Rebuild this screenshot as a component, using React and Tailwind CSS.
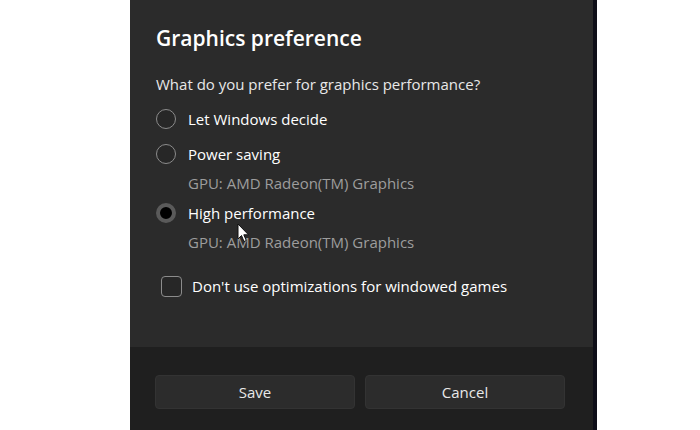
export default function App() {
  const font = { fontFamily: '"Open Sans", "Noto Sans", sans-serif' };
  return (
    <div className="w-[700px] h-[430px] flex bg-white overflow-hidden" style={font}>
      <div className="w-[130px] shrink-0 bg-white" />
      <div className="relative w-[463px] shrink-0 flex flex-col bg-[#2b2b2b]">
        <div className="flex-1 pl-[26px] pt-[24px]">
          <h1 className="text-[21px] leading-[28px] font-semibold text-white">Graphics preference</h1>
          <p className="mt-[22px] text-[15px] leading-[20px] text-[#e8e8e8]">
            What do you prefer for graphics performance?
          </p>

          <div className="mt-[15px] flex items-center gap-[12px] h-[20px]">
            <span className="w-[20px] h-[20px] rounded-full border-[1.5px] border-[#8c8c8c] bg-[#272727]" />
            <span className="text-[15px] text-white">Let Windows decide</span>
          </div>

          <div className="mt-[15px] flex items-center gap-[12px] h-[20px]">
            <span className="w-[20px] h-[20px] rounded-full border-[1.5px] border-[#8c8c8c] bg-[#272727]" />
            <span className="text-[15px] text-white">Power saving</span>
          </div>
          <p className="mt-[9px] pl-[32px] text-[15px] leading-[20px] text-[#9d9d9d]">GPU: AMD Radeon(TM) Graphics</p>

          <div className="mt-[10px] flex items-center gap-[12px] h-[20px]">
            <span className="w-[20px] h-[20px] rounded-full border-[4px] border-[#5a5a5a] bg-black" />
            <span className="text-[15px] text-white">High performance</span>
          </div>
          <p className="mt-[9px] pl-[32px] text-[15px] leading-[20px] text-[#9d9d9d]">GPU: AMD Radeon(TM) Graphics</p>

          <div className="mt-[23px] ml-[5px] flex items-center gap-[10px] h-[22px]">
            <span className="w-[21px] h-[21px] rounded-[4px] border-[1.5px] border-[#8c8c8c] bg-[#272727]" />
            <span className="text-[15px] text-white">Don't use optimizations for windowed games</span>
          </div>
        </div>

        <div className="h-[83px] bg-[#1f1f1f] pl-[25px] pr-[28px] pt-[28px]">
          <div className="grid grid-cols-2 gap-[10px]">
            <button className="h-[34px] rounded-[4px] bg-[#2c2c2c] border border-[#333] text-[15px] text-[#e8e8e8]">
              Save
            </button>
            <button className="h-[34px] rounded-[4px] bg-[#2c2c2c] border border-[#333] text-[15px] text-[#e8e8e8]">
              Cancel
            </button>
          </div>
        </div>

        <svg className="absolute left-[107px] top-[223px]" width="13" height="20" viewBox="0 0 13 20">
          <path d="M1 1 L1 16 L4.5 12.5 L7 18.5 L9.3 17.5 L6.8 11.8 L11.5 11.8 Z" fill="#fff" stroke="#111" strokeWidth="1" strokeLinejoin="round" />
        </svg>
      </div>
      <div className="w-[4px] shrink-0 bg-[#0e0e18]" />
      <div className="flex-1 bg-white" />
    </div>
  );
}
